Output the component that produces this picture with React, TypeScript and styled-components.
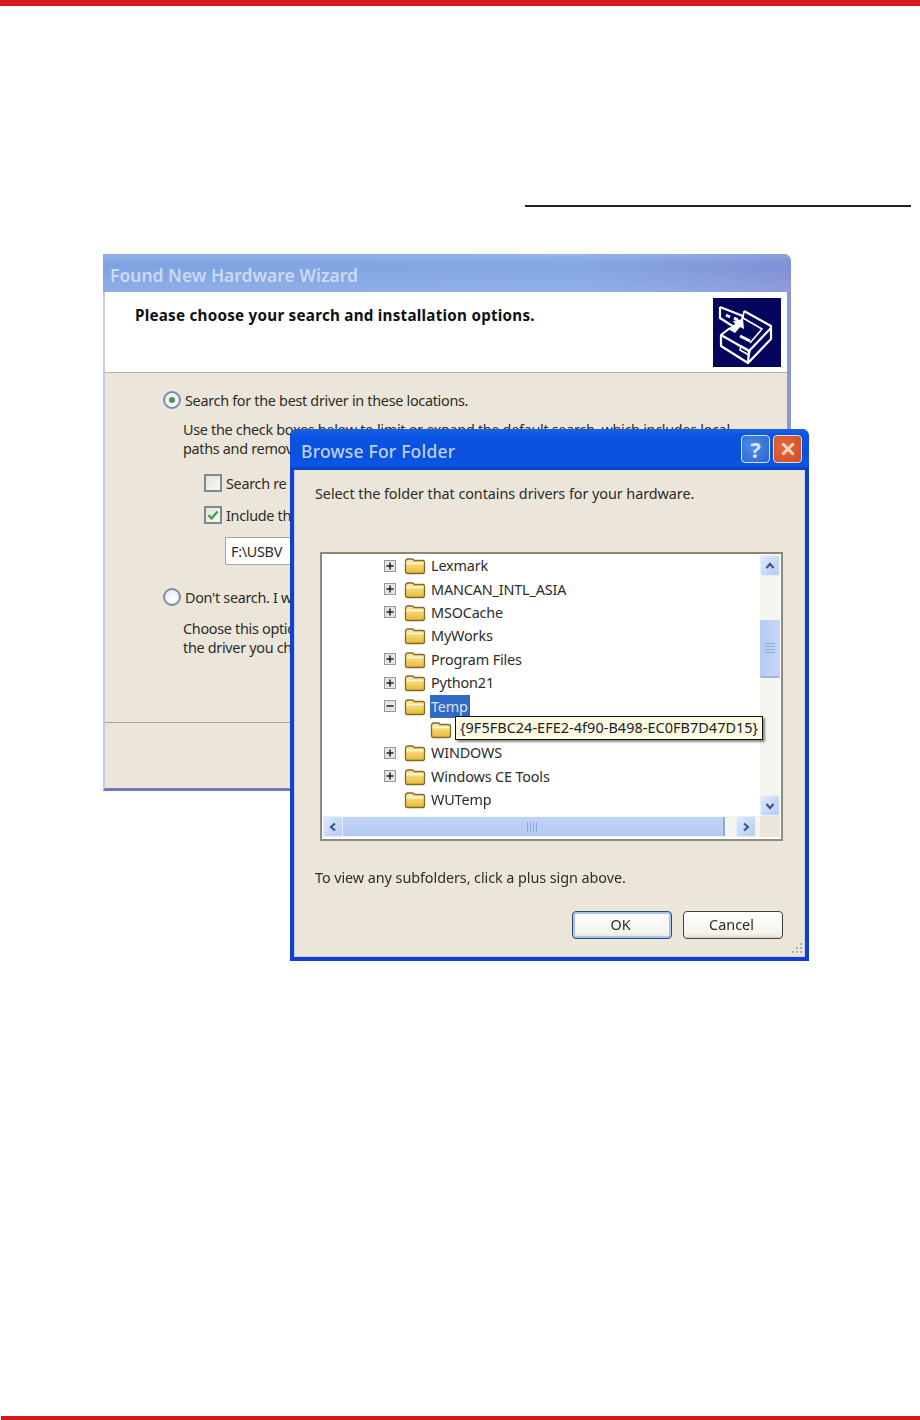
import React from 'react'
import styled, { createGlobalStyle } from 'styled-components'

const UI_FONT = '"Noto Sans", "Liberation Sans", sans-serif'

const GlobalStyle = createGlobalStyle`
  html, body {
    margin: 0;
    padding: 0;
    background: #fff;
  }
`

const Page = styled.div`
  position: relative;
  display: flex;
  flex-direction: column;
  width: 920px;
  height: 1420px;
  overflow: hidden;
  font-family: ${UI_FONT};
  color: #2c2c28;
`

const TopBar = styled.div`
  height: 6px;
  background: #db1a21;
`

const Rule = styled.div`
  width: 386px;
  height: 2px;
  margin: 199px 0 0 525px;
  background: #231f20;
`

const BottomBar = styled.div`
  height: 4px;
  margin: auto 0 0 1px;
  background: #d2181f;
`

const Figure = styled.div`
  position: relative;
  width: 706px;
  height: 707px;
  margin: 47px 0 0 103px;
  filter: blur(0.4px);
`

/* background wizard */
const Wizard = styled.div`
  display: flex;
  flex-direction: column;
  box-sizing: border-box;
  width: 688px;
  height: 537px;
  background: #ebe6d9;
  border-left: 2px solid #c3cbdf;
  border-right: 4px solid #8d96cf;
  border-bottom: 3px solid #6f79bd;
  border-top-right-radius: 8px;
  white-space: nowrap;
`

const WizardTitle = styled.div`
  display: flex;
  align-items: center;
  box-sizing: border-box;
  height: 38px;
  margin: 0 -4px 0 -2px;
  padding: 3px 0 0 7px;
  border-top-right-radius: 7px;
  background: linear-gradient(180deg, rgba(255, 255, 255, 0.14), rgba(255, 255, 255, 0) 30%, rgba(255, 255, 255, 0.12)),
    linear-gradient(90deg, #7fa3e2 0%, #83a6e4 70%, #7f8fd6 100%);
  color: #c9daf4;
  font-size: 17.5px;
  font-weight: 600;
`

const WizardHeader = styled.div`
  display: flex;
  justify-content: space-between;
  box-sizing: border-box;
  height: 81px;
  padding: 6px 6px 0 30px;
  background: #fff;
  border-bottom: 1px solid #b5b09c;
`

const HeaderTitle = styled.div`
  margin-top: 7px;
  color: #111;
  font-size: 15.2px;
  font-weight: 700;
  letter-spacing: 0.25px;
`

const WizardBody = styled.div`
  flex: 1;
  padding: 17px 0 0 58px;
  font-size: 14.4px;
  line-height: 19px;
  letter-spacing: -0.3px;
`

const OptionRow = styled.div<{ $top: number; $indent?: number }>`
  display: flex;
  align-items: center;
  gap: 4px;
  height: 20px;
  margin-top: ${(p) => p.$top}px;
  margin-left: ${(p) => p.$indent ?? 0}px;
`

const Description = styled.div<{ $top: number }>`
  margin: ${(p) => p.$top}px 0 0 20px;
`

const Radio = styled.span<{ $checked?: boolean }>`
  display: flex;
  align-items: center;
  justify-content: center;
  box-sizing: border-box;
  width: 18px;
  height: 18px;
  border: 2px solid #7b8fa3;
  border-radius: 50%;
  background: radial-gradient(circle at 60% 60%, #fff, #dfe4ea);

  &::after {
    content: '';
    display: ${(p) => (p.$checked ? 'block' : 'none')};
    width: 6px;
    height: 6px;
    border-radius: 50%;
    background: #3f9a55;
  }
`

const CheckBox = styled.span`
  display: flex;
  align-items: center;
  justify-content: center;
  box-sizing: border-box;
  width: 18px;
  height: 18px;
  border: 2px solid #7d8a90;
  background: linear-gradient(135deg, #e3e3dc, #fafaf6);
`

const PathInput = styled.div`
  box-sizing: border-box;
  width: 100px;
  height: 28px;
  margin: 12px 0 0 62px;
  padding: 4px 5px;
  border: 1px solid #a8a898;
  background: #fff;
`

const WizardFooter = styled.div`
  height: 65px;
  border-top: 1px solid #a6a391;
`

/* dialog on top */
const Dialog = styled.div`
  position: absolute;
  left: 187px;
  top: 175px;
  display: flex;
  flex-direction: column;
  box-sizing: border-box;
  width: 519px;
  height: 532px;
  padding: 0 4px 4px 4px;
  background: #0f40cf;
  border-radius: 7px 7px 0 0;
  white-space: nowrap;
`

const DialogTitle = styled.div`
  display: flex;
  align-items: center;
  justify-content: space-between;
  box-sizing: border-box;
  height: 41px;
  margin: 0 -4px;
  padding: 2px 7px 0 11px;
  border-radius: 7px 7px 0 0;
  background: linear-gradient(180deg, #1a62e0 0%, #0c55e4 15%, #0a4fdc 60%, #0b56e6 88%, #0a3cc0 100%);
  color: #bcd2f3;
  font-size: 17.5px;
  font-weight: 500;
  letter-spacing: 0.2px;
`

const CaptionButtons = styled.div`
  display: flex;
  gap: 3px;
  margin-top: -4px;
`

const CaptionButton = styled.div<{ $close?: boolean }>`
  display: flex;
  align-items: center;
  justify-content: center;
  box-sizing: border-box;
  width: 29px;
  height: 28px;
  border: 1px solid #d6e2f6;
  border-radius: 4px;
  background: ${(p) =>
    p.$close
      ? 'radial-gradient(circle at 40% 40%, #e66a3e, #cf4a22)'
      : 'radial-gradient(circle at 40% 40%, #4d8fe6, #2a62cc)'};
  color: #d5e6fa;
  font-size: 22px;
  font-weight: 700;
`

const DialogBody = styled.div`
  position: relative;
  flex: 1;
  padding: 14px 0 0 20px;
  background: #ebe6d9;
  border: 1px solid #c6d3ee;
  border-top: none;
  font-size: 14.4px;
  line-height: 20px;
`

const Prompt = styled.div`
  letter-spacing: -0.06px;
`

const TreeBox = styled.div`
  display: grid;
  grid-template-columns: 1fr 20px;
  grid-template-rows: 262px 21px;
  box-sizing: border-box;
  width: 463px;
  height: 289px;
  margin: 48px 0 0 5px;
  padding-right: 1px;
  border: 2px solid #8d8c7c;
  border-top-color: #8a886f;
  background: #fff;
`

const TreeList = styled.div`
  padding-top: 0;
`

const TreeRow = styled.div<{ $child?: boolean }>`
  position: relative;
  display: flex;
  align-items: center;
  gap: 5px;
  height: 23.4px;
  padding-left: ${(p) => (p.$child ? 108 : 62)}px;
`

const ExpanderSlot = styled.span`
  display: flex;
  align-items: center;
  width: 12px;
  margin-right: 3px;
`

const TreeLabel = styled.span<{ $selected?: boolean }>`
  padding: 0 2px 0 1px;
  height: 23px;
  margin-left: -1px;
  line-height: 23px;
  color: ${(p) => (p.$selected ? '#d8e4f6' : '#2c2c28')};
  background: ${(p) => (p.$selected ? '#316ac5' : 'transparent')};
  letter-spacing: -0.15px;
`

const Tooltip = styled.div`
  position: absolute;
  left: 133px;
  top: -2px;
  z-index: 2;
  box-sizing: border-box;
  width: 308px;
  height: 24px;
  padding-left: 4px;
  border: 1px solid #111;
  background: #fbf9e2;
  box-shadow: 2px 2px 2px rgba(0, 0, 0, 0.45);
  color: #222;
  line-height: 22px;
  letter-spacing: 0.07px;
`

const VScroll = styled.div`
  display: flex;
  flex-direction: column;
  background: #f6f6f0;
  padding-top: 1px;
`

const ScrollButton = styled.div`
  display: flex;
  align-items: center;
  justify-content: center;
  flex: none;
  width: 20px;
  height: 21px;
  border-radius: 2px;
  background: linear-gradient(135deg, #dfe9fb, #b6cbf3);
  border: 1px solid #e8eefb;
  box-sizing: border-box;
`

const VThumb = styled.div`
  display: flex;
  align-items: center;
  justify-content: center;
  width: 20px;
  height: 58px;
  margin: 44px 0 auto;
  box-sizing: border-box;
  border-radius: 2px;
  border-bottom: 2px solid #9fb4dc;
  background: linear-gradient(90deg, #b4caf4, #c6d6f7);
`

const Grip = styled.div<{ $horizontal?: boolean }>`
  width: ${(p) => (p.$horizontal ? '12px' : '10px')};
  height: 10px;
  background: ${(p) =>
    p.$horizontal
      ? 'repeating-linear-gradient(90deg, #8fa8d8 0 1px, transparent 1px 3px)'
      : 'repeating-linear-gradient(0deg, #8fa8d8 0 1px, transparent 1px 3px)'};
`

const HScroll = styled.div`
  display: flex;
  align-items: center;
  background: #f6f6f0;
  padding-left: 1px;
`

const HThumb = styled.div`
  display: flex;
  align-items: center;
  justify-content: center;
  width: 380px;
  height: 19px;
  margin-right: 11px;
  border-right: 2px solid #93a9d6;
  background: linear-gradient(180deg, #c1d4f7, #b5caf3);
`

const Corner = styled.div`
  background: #ebe6d9;
`

const Hint = styled.div`
  margin-top: 27px;
  letter-spacing: -0.07px;
`

const ButtonRow = styled.div`
  display: flex;
  gap: 11px;
  margin: 23px 0 0 257px;
`

const PushButton = styled.div<{ $default?: boolean }>`
  display: flex;
  align-items: center;
  justify-content: center;
  box-sizing: border-box;
  width: 100px;
  height: 28px;
  padding-right: 3px;
  border: 1px solid ${(p) => (p.$default ? '#2d4a7c' : '#3c4448')};
  border-radius: 4px;
  background: linear-gradient(180deg, #fff, #f3f2ea 85%, #dcd8c8);
  box-shadow: ${(p) => (p.$default ? 'inset 0 0 0 2px #a9c3ea' : 'none')};
`

const ResizeGrip = styled.svg`
  position: absolute;
  right: 1px;
  bottom: 1px;
`

const FolderIcon: React.FC = () => (
  <svg width="22" height="19" viewBox="0 0 22 19" style={{ flex: 'none' }}>
    <defs>
      <linearGradient id="folderFill" x1="0" y1="0" x2="0" y2="1">
        <stop offset="0" stopColor="#fdeea8" />
        <stop offset="1" stopColor="#e9b834" />
      </linearGradient>
    </defs>
    <path
      d="M1.5 6 Q1.5 3 4 3 L8 3 Q9.5 3 10 4.5 L18.5 4.5 Q20.5 4.5 20.5 6.5 L20.5 15.5 Q20.5 17.5 18.5 17.5 L3.5 17.5 Q1.5 17.5 1.5 15.5 Z"
      fill="url(#folderFill)"
      stroke="#7f6a2a"
      strokeWidth="1.3"
    />
    <path d="M2.5 7.5 L19.5 7.5" stroke="#fff8dc" strokeWidth="1.5" />
  </svg>
)

const Expander: React.FC<{ open?: boolean }> = ({ open }) => (
  <svg width="12" height="12" viewBox="0 0 12 12">
    <rect x="0.5" y="0.5" width="11" height="11" fill="#e6e6de" stroke="#8f9aa8" />
    <path d={open ? 'M2.5 6 H9.5' : 'M2.5 6 H9.5 M6 2.5 V9.5'} stroke="#222" strokeWidth="1.5" />
  </svg>
)

const Chevron: React.FC<{ dir: 'up' | 'down' | 'left' | 'right' }> = ({ dir }) => {
  const paths = {
    up: 'M2.5 8 L6 4 L9.5 8',
    down: 'M2.5 4 L6 8 L9.5 4',
    left: 'M8 2.5 L4 6 L8 9.5',
    right: 'M4 2.5 L8 6 L4 9.5',
  }
  return (
    <svg width="12" height="12" viewBox="0 0 12 12">
      <path d={paths[dir]} fill="none" stroke="#3d5590" strokeWidth="2.2" />
    </svg>
  )
}

const CheckMark: React.FC = () => (
  <svg width="12" height="12" viewBox="0 0 12 12">
    <path d="M1.5 6 L4.5 9.5 L10.5 2.5" fill="none" stroke="#35a04a" strokeWidth="2.2" />
  </svg>
)

const CloseMark: React.FC = () => (
  <svg width="16" height="16" viewBox="0 0 16 16">
    <path d="M2.5 2.5 L13.5 13.5 M13.5 2.5 L2.5 13.5" stroke="#f6d9c8" strokeWidth="3" />
  </svg>
)

const HardwareIcon: React.FC = () => (
  <svg width="68" height="69" viewBox="0 0 68 69" style={{ flex: 'none' }}>
    <rect width="68" height="69" fill="#04045c" />
    <g fill="none" stroke="#fff" strokeWidth="2.2" strokeLinejoin="round">
      {/* card */}
      <path d="M7 9 L7 20 L21 29 M7 9 L30 18 L28 25" />
      <path d="M13 17 L17 19 M21 20 L25 22" strokeWidth="2.6" />
      {/* tray */}
      <path d="M31 13 L58 28 L58 41 L35 65 L8 48 L8 37 L17 30" />
      <path d="M8 37 L36 53 L58 30" />
      <path d="M36 53 L35 65" />
      <path d="M31 13 L30 20 L49 31 L37 45" strokeWidth="1.6" />
      <path d="M27 38 L37 43" strokeWidth="3" />
      <path d="M28 48 L37 53 L36 57 L27 52 Z" strokeWidth="1.6" />
    </g>
    {/* arrow */}
    <path d="M30 21 L31 31 L27 29 L22 35 L15 31 L22 26 L20 23 Z" fill="#fff" />
  </svg>
)

type Folder = { name: string; expander?: 'plus' | 'minus'; selected?: boolean }

const FOLDERS: Folder[] = [
  { name: 'Lexmark', expander: 'plus' },
  { name: 'MANCAN_INTL_ASIA', expander: 'plus' },
  { name: 'MSOCache', expander: 'plus' },
  { name: 'MyWorks' },
  { name: 'Program Files', expander: 'plus' },
  { name: 'Python21', expander: 'plus' },
  { name: 'Temp', expander: 'minus', selected: true },
]

const FOLDERS_AFTER: Folder[] = [
  { name: 'WINDOWS', expander: 'plus' },
  { name: 'Windows CE Tools', expander: 'plus' },
  { name: 'WUTemp' },
]

const renderFolder = (f: Folder) => (
  <TreeRow key={f.name}>
    <ExpanderSlot>{f.expander && <Expander open={f.expander === 'minus'} />}</ExpanderSlot>
    <FolderIcon />
    <TreeLabel $selected={f.selected}>{f.name}</TreeLabel>
  </TreeRow>
)

const App: React.FC = () => {
  const tempId = '{9F5FBC24-EFE2-4f90-B498-EC0FB7D47D15}'

  return (
    <Page>
      <GlobalStyle />
      <TopBar />
      <Rule />
      <Figure>
        <Wizard>
          <WizardTitle>Found New Hardware Wizard</WizardTitle>
          <WizardHeader>
            <HeaderTitle>Please choose your search and installation options.</HeaderTitle>
            <HardwareIcon />
          </WizardHeader>
          <WizardBody>
            <OptionRow $top={0}>
              <Radio $checked />
              Search for the best driver in these locations.
            </OptionRow>
            <Description $top={10}>
              Use the check boxes below to limit or expand the default search, which includes local
              <br />
              paths and remov
            </Description>
            <OptionRow $top={15} $indent={41}>
              <CheckBox />
              Search re
            </OptionRow>
            <OptionRow $top={12} $indent={41}>
              <CheckBox>
                <CheckMark />
              </CheckBox>
              Include th
            </OptionRow>
            <PathInput>F:\USBV</PathInput>
            <OptionRow $top={22}>
              <Radio />
              Don't search. I w
            </OptionRow>
            <Description $top={12}>
              Choose this optio
              <br />
              the driver you ch
            </Description>
          </WizardBody>
          <WizardFooter />
        </Wizard>

        <Dialog>
          <DialogTitle>
            Browse For Folder
            <CaptionButtons>
              <CaptionButton>?</CaptionButton>
              <CaptionButton $close>
                <CloseMark />
              </CaptionButton>
            </CaptionButtons>
          </DialogTitle>
          <DialogBody>
            <Prompt>Select the folder that contains drivers for your hardware.</Prompt>
            <TreeBox>
              <TreeList>
                {FOLDERS.map(renderFolder)}
                <TreeRow $child>
                  <FolderIcon />
                  <Tooltip>{tempId}</Tooltip>
                </TreeRow>
                {FOLDERS_AFTER.map(renderFolder)}
              </TreeList>
              <VScroll>
                <ScrollButton>
                  <Chevron dir="up" />
                </ScrollButton>
                <VThumb>
                  <Grip />
                </VThumb>
                <ScrollButton>
                  <Chevron dir="down" />
                </ScrollButton>
              </VScroll>
              <HScroll>
                <ScrollButton>
                  <Chevron dir="left" />
                </ScrollButton>
                <HThumb>
                  <Grip $horizontal />
                </HThumb>
                <ScrollButton>
                  <Chevron dir="right" />
                </ScrollButton>
              </HScroll>
              <Corner />
            </TreeBox>
            <Hint>To view any subfolders, click a plus sign above.</Hint>
            <ButtonRow>
              <PushButton $default>OK</PushButton>
              <PushButton>Cancel</PushButton>
            </ButtonRow>
            <ResizeGrip width="14" height="14" viewBox="0 0 14 14">
              <path d="M11 2h2v2h-2zM7 6h2v2H7zM11 6h2v2h-2zM3 10h2v2H3zM7 10h2v2H7zM11 10h2v2h-2z" fill="#b4b0a0" />
            </ResizeGrip>
          </DialogBody>
        </Dialog>
      </Figure>
      <BottomBar />
    </Page>
  )
}

export default App
